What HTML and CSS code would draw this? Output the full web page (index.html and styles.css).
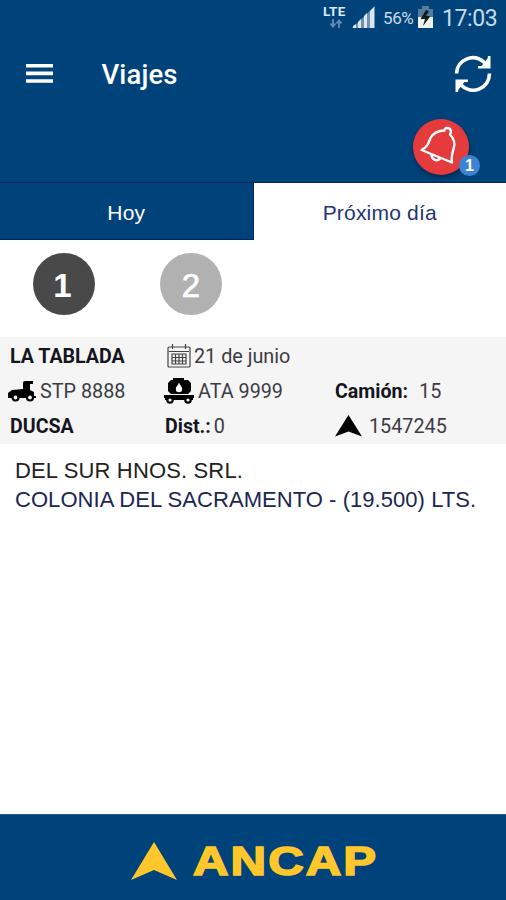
FILE: index.html
```html
<!DOCTYPE html>
<html lang="es">
<head>
<meta charset="utf-8">
<title>Viajes</title>
<link rel="stylesheet" href="styles.css">
</head>
<body>
<div class="app">
  <header class="header">
    <div class="status">
      <div class="network">
        <span class="lte">LTE</span>
        <svg width="14" height="9" viewBox="0 0 14 9" fill="none" stroke="#668bb0" stroke-width="1.800"><path d="M4 0v7M1.500 4.500 4 7.500l2.500-3M10 9V2M7.500 4.500 10 1.500l2.500 3"/></svg>
      </div>
      <svg class="signal" width="24" height="22" viewBox="0 0 24 22"><path fill="#6c91b3" d="M0 22 23 0v22z"/><path fill="#dce8f1" d="M1 22v-2l3-2v4zM6 22v-6l3-3v9zM12 22V10l3-3v15zM18 22V5l4-4v21z"/></svg>
      <span class="percent">56%</span>
      <svg class="battery" width="15" height="22" viewBox="0 0 15 22"><path fill="#547d9c" d="M4 0h7v3h4v8H0V3h4z"/><path fill="#f0f1ec" d="M0 11h15v11H0z"/><path fill="#111b20" d="M8 4 2.500 13H7l-2 7 7.500-10H8l3-5z"/></svg>
      <span class="clock">17:03</span>
    </div>
    <div class="toolbar">
      <svg class="menu" width="28" height="22" viewBox="0 0 28 22"><path stroke="#fff" stroke-width="3.600" d="M0 2.800h27M0 10.400h27M0 18h27"/></svg>
      <h1 class="title">Viajes</h1>
      <svg class="refresh" width="38" height="38" viewBox="0 0 38 38"><path fill="none" stroke="#fff" stroke-width="3.600" d="M2.500 18.500C3 5 19-3 31 8M35.500 18.500C35 33 19 41 7 30"/><path fill="#fff" d="M36.500 1v12.500H24V11h3.500l6-7.500L34 1zM1.500 37V24.500H14V27h-3.500l-6 7.500L4 37z"/></svg>
    </div>
    <div class="alerts">
      <div class="alert">
        <svg width="56" height="56" viewBox="0 0 56 56" fill="none" stroke="#fff" stroke-width="2.400" stroke-linejoin="round"><path d="M8.500 31c6-3 7-7 9-12 3-5 8-7.500 14-7.500 0-3.500 5.500-3.500 6.500.5 0 1.500-.5 2.500-1 3.500 4 4 5.500 9 3.500 14.500-1.500 5-2.500 8-1.500 13.500z"/><path d="M18.500 35.500c0 5.500 6 7.500 9 3.500"/></svg>
        <span class="badge">1</span>
      </div>
    </div>
  </header>
  <nav class="tabs">
    <div class="tab">Hoy</div>
    <div class="tab active">Próximo día</div>
  </nav>
  <div class="trips">
    <div class="trip selected">1</div>
    <div class="trip">2</div>
  </div>
  <section class="info">
    <div class="cell"><b class="depot">LA TABLADA</b></div>
    <div class="cell date">
      <svg width="24" height="24" viewBox="0 0 24 24" fill="none" stroke="#444" stroke-width="1.200"><rect x="1" y="3" width="22" height="20" rx="1"/><path d="M2 7.500h20M5.500 0v5M18.500 0v5M5 10h14v10H5zM5 13.500h14M5 17h14M8.500 10v10M12 10v10M15.500 10v10"/></svg>
      <span>21 de junio</span>
    </div>
    <div class="cell"></div>
    <div class="cell tractor">
      <svg width="29" height="21" viewBox="0 0 29 21"><path d="M0 16v-4l4-3 11-1V2q0-2 2-2h8v3h-3v6l4 2v4h2v2H0z"/><circle cx="7.500" cy="16.500" r="3" fill="#f5f5f5" stroke="#000" stroke-width="2.200"/><circle cx="22" cy="16.500" r="3" fill="#f5f5f5" stroke="#000" stroke-width="2.200"/></svg>
      <span>STP 8888</span>
    </div>
    <div class="cell tank">
      <svg width="32" height="26" viewBox="0 0 32 26"><path d="M10 0h11v2h4l3 3v8l-3 3H8l-3-3V5l3-3h2zM1 17h30v3h-1v2H2v-2H1z"/><circle cx="7" cy="22" r="2.700" fill="#f5f5f5" stroke="#000" stroke-width="2.200"/><circle cx="25" cy="22" r="2.700" fill="#f5f5f5" stroke="#000" stroke-width="2.200"/><path fill="#fff" d="M16 4.500c1 3 3.200 4 3.200 6.500a3.200 3.200 0 0 1-6.400 0C12.800 8.500 15 7.500 16 4.500"/></svg>
      <span>ATA 9999</span>
    </div>
    <div class="cell"><b class="label-truck">Camión:</b><span class="truck">15</span></div>
    <div class="cell"><b class="client">DUCSA</b></div>
    <div class="cell"><b class="label-dist">Dist.:</b><span class="dist">0</span></div>
    <div class="cell order">
      <svg width="27" height="22" viewBox="0 0 27 22"><path d="M13.500 0 27 21.500l-13.500-5L0 21.500z"/></svg>
      <span>1547245</span>
    </div>
  </section>
  <main class="delivery">
    <div class="customer">DEL SUR HNOS. SRL.</div>
    <div class="place">COLONIA DEL SACRAMENTO - (19.500) LTS.</div>
  </main>
  <footer class="footer">
    <svg width="46" height="38" viewBox="0 0 46 38"><path fill="#ffc72c" d="M23 0 46 38 23 28 0 38z"/></svg>
    <span class="brand">ANCAP</span>
  </footer>
</div>
</body>
</html>
```
FILE: styles.css
```css
* { box-sizing: border-box; }
body { margin: 0; background: #fff; font-family: Roboto, sans-serif; }
svg { display: block; flex: none; }
.app { width: 506px; height: 900px; display: flex; flex-direction: column; overflow: hidden; white-space: nowrap; }
.header { height: 182px; background: #00437a; color: #fff; flex: none; }
.status { height: 38px; display: flex; padding-left: 323px; color: #c9dbe9; }
.network { width: 24px; padding-top: 5px; }
.network svg { margin: 1px 0 0 6px; }
.lte { display: block; font: 700 13.500px/13px Roboto, sans-serif; letter-spacing: 0.3px; color: #dce8f1; }
.signal { margin: 6px 0 0 5px; }
.percent { margin-left: 7px; width: 34px; font-size: 17px; line-height: 37px; letter-spacing: -0.4px; }
.battery { margin: 6px 0 0 1px; }
.clock { margin-left: 9px; font-size: 23px; line-height: 37px; letter-spacing: -0.4px; }
.toolbar { height: 74px; display: flex; align-items: center; padding: 0 14px 0 26px; }
.title { margin: 0 auto 0 47.500px; font-size: 27.500px; font-weight: 500; line-height: 32px; letter-spacing: 0.1px; }
.menu { margin-top: -3px; }
.refresh { margin-top: -2px; }
.alerts { height: 70px; display: flex; justify-content: flex-end; padding: 7px 37px 0 0; }
.alert { position: relative; width: 56px; height: 56px; border-radius: 50%; background: #e63b3d; box-shadow: 1px 3px 5px rgba(0, 20, 50, .55); }
.badge { position: absolute; left: 46px; top: 36px; width: 21px; height: 21px; border-radius: 50%; background: #3c83d5; font: 700 16px/22px "Liberation Sans", sans-serif; text-align: center; }
.tabs { height: 58px; flex: none; display: flex; background: #00437a; border-top: 1px solid #00246a; }
.tab { flex: 1; font: 21px/60px "Liberation Sans", sans-serif; letter-spacing: 0.2px; text-align: center; color: #fff; border-bottom: 1px solid #00246a; }
.tab.active { background: #fff; color: #233577; border: 0; border-left: 1px solid #00246a; }
.trips { height: 97px; flex: none; display: flex; gap: 65px; padding: 13px 33px; }
.trip { width: 62px; height: 62px; border-radius: 50%; background: #b1b1b1; color: #fff; font: 33px/65px "Liberation Sans", sans-serif; text-align: center; -webkit-text-stroke: 0.7px #fff; }
.trip.selected { background: #494949; font-weight: 700; -webkit-text-stroke: 0; text-indent: -3px; }
.info { height: 107px; flex: none; background: #f5f5f5; color: #3c3c44; display: grid; grid-template-columns: 155px 170px 1fr; grid-template-rows: repeat(3, 35px); padding: 2px 0 0 10px; font-size: 19.800px; }
.cell { display: flex; align-items: center; line-height: 35px; }
.info b { color: #15151f; font-weight: 700; font-size: 19.600px; }
.cell svg { margin-top: -1px; }
.date svg { margin-left: 2px; margin-right: 3px; }
.tractor svg { margin-left: -2px; margin-right: 3px; }
.tank svg { margin-left: -2px; margin-right: 3px; }
.order svg { margin-right: 7px; }
.truck { margin-left: 11px; }
.dist { margin-left: 3px; }
.delivery { flex: 1; padding: 13px 15px 0; font: 22px/28.500px "Liberation Sans", sans-serif; }
.customer { color: #222; letter-spacing: 0.15px; }
.place { color: #202554; letter-spacing: 0.05px; }
.footer { height: 86px; flex: none; background: #00437a; border-top: 1px solid #285d8b; display: flex; align-items: center; padding: 6px 0 0 131px; }
.brand { margin-left: 16px; color: #ffc72c; font: 700 41px/44px "Liberation Sans", sans-serif; letter-spacing: 1.700px; -webkit-text-stroke: 1.600px #ffc72c; transform: scaleX(1.200); transform-origin: left; }
```
